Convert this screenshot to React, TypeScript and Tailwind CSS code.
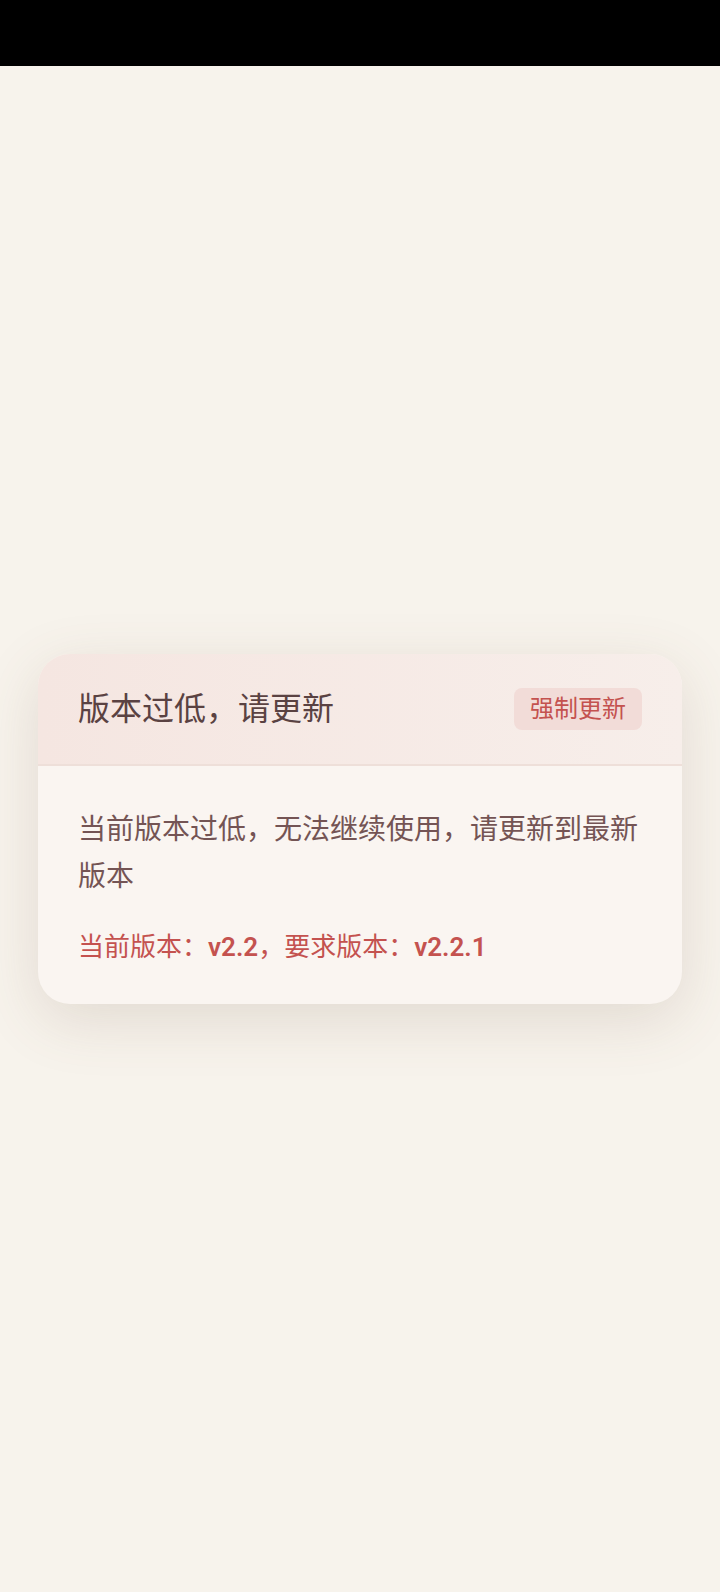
export default function App() {
  return (
    <div
      className="flex min-h-[1592px] w-full flex-col bg-[#f7f3ec]"
      style={{ fontFamily: "Roboto, 'Noto Sans CJK SC', sans-serif" }}
    >
      {/* status bar */}
      <div className="h-[66px] w-full bg-black" />

      <div className="flex flex-1 items-center justify-center px-[38px]">
        <div className="w-full overflow-hidden rounded-[32px] bg-[#faf5f1] shadow-[0_16px_60px_rgba(120,90,70,0.16)]">
          {/* header */}
          <div className="flex h-[112px] items-center justify-between border-b-2 border-[#eedfd9] bg-gradient-to-r from-[#f5e6e1] to-[#f7eeea] px-[40px]">
            <h1 className="text-[32px] font-normal leading-none text-[#5a4242]">
              版本过低，请更新
            </h1>
            <span className="rounded-[8px] bg-[#f2dcd8] px-[16px] py-[9px] text-[24px] leading-[24px] text-[#c4524f]">
              强制更新
            </span>
          </div>

          {/* body */}
          <div className="px-[40px] pb-[37px] pt-[40px]">
            <p className="text-[28px] leading-[47px] text-[#745454]">
              当前版本过低，无法继续使用，请更新到最新版本
            </p>
            <p className="mt-[27px] text-[26px] leading-[40px] text-[#c4524f]">
              当前版本：<span className="font-semibold">v2.2</span>，要求版本：
              <span className="font-semibold">v2.2.1</span>
            </p>
          </div>
        </div>
      </div>
    </div>
  );
}
